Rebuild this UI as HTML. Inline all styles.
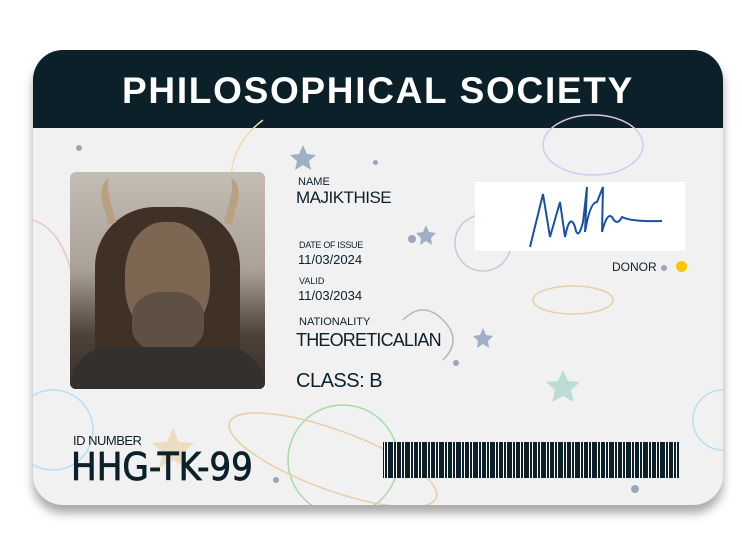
<!DOCTYPE html>
<html><head><style>
body{margin:0;width:742px;height:549px;background:#fff;position:relative;overflow:hidden;font-family:"Liberation Sans",sans-serif}
.card{position:absolute;left:33px;top:50px;width:690px;height:455px;border-radius:30px;background:#f1f1f1;overflow:hidden;box-shadow:0 8px 10px rgba(0,0,0,.35)}
.hdr{position:absolute;left:0;top:0;width:690px;height:78px;background:#0c202a;color:#fff;font-weight:bold;font-size:37px;text-align:center;line-height:82px;letter-spacing:1.7px}
.t{position:absolute;color:#0c202a;white-space:nowrap}
.dot{position:absolute;border-radius:50%;background:#9aa6b8}
</style></head><body>
<div class="card">
<div class="hdr">PHILOSOPHICAL SOCIETY</div>
<svg width="690" height="455" style="position:absolute;left:0;top:0">
<g fill="none" stroke-width="1.5">
<circle cx="310" cy="410" r="55" stroke="#a9d9a5"/>
<ellipse cx="300" cy="410" rx="110" ry="30" stroke="#e6cfa8" transform="rotate(20 300 410)"/>
<circle cx="450" cy="193" r="28" stroke="#c3ccd6"/>
<ellipse cx="540" cy="250" rx="40" ry="14" stroke="#e6cfa8"/>
<circle cx="20" cy="380" r="40" stroke="#b8def0"/>
<circle cx="690" cy="370" r="30" stroke="#b8def0"/>
<path d="M230 70 q-40 30 -30 80" stroke="#f0dca8"/>
<path d="M0 170 q30 10 40 60" stroke="#f0c0cc"/>
<path d="M370 270 q20 -20 40 0 q20 20 0 40" stroke="#b0b8c4"/>
<ellipse cx="560" cy="95" rx="50" ry="30" stroke="#d9c6ee"/>
</g>
<g fill="#9fb0c6"><path d="M270 95l4 9 9 1-7 6 2 9-8-5-8 5 2-9-7-6 9-1z"/><path d="M393 175l3 7 7 1-5 5 1 7-6-4-6 4 1-7-5-5 7-1z"/><path d="M450 278l3 7 7 1-5 5 1 7-6-4-6 4 1-7-5-5 7-1z"/></g>
<path d="M530 320l5 11 12 1-9 8 3 12-11-6-11 6 3-12-9-8 12-1z" fill="#bcdcd6"/>
<path d="M140 378l6 14 15 1-11 10 4 15-14-8-14 8 4-15-11-10 15-1z" fill="#ecdcc0"/>
</svg>
<div class="dot" style="left:43px;top:95px;width:6px;height:6px"></div>
<div class="dot" style="left:340px;top:110px;width:5px;height:5px"></div>
<div class="dot" style="left:375px;top:185px;width:8px;height:8px"></div>
<div class="dot" style="left:420px;top:310px;width:6px;height:6px"></div>
<div class="dot" style="left:598px;top:435px;width:8px;height:8px"></div>
<div class="dot" style="left:628px;top:215px;width:6px;height:6px"></div>
<div class="dot" style="left:240px;top:427px;width:6px;height:6px"></div>
<div style="position:absolute;left:37px;top:122px;width:195px;height:217px;border-radius:6px;overflow:hidden;background:linear-gradient(180deg,#c3bdb4 0,#aaa197 45%,#4e4238 75%,#35302c 100%)">
<div style="position:absolute;left:25px;top:35px;width:145px;height:185px;border-radius:60px 60px 10px 10px;background:#3f3125"></div>
<div style="position:absolute;left:55px;top:50px;width:85px;height:115px;border-radius:45%;background:#7d6753"></div>
<div style="position:absolute;left:62px;top:120px;width:72px;height:60px;border-radius:40%;background:#5e5044"></div>
<div style="position:absolute;left:0;top:175px;width:195px;height:50px;background:#33302d;border-radius:40px 40px 0 0"></div>
<div style="position:absolute;left:32px;top:5px;width:20px;height:45px;border-radius:50% 50% 0 0;border-left:8px solid #b8a080;transform:rotate(-15deg)"></div>
<div style="position:absolute;left:140px;top:5px;width:20px;height:45px;border-radius:50% 50% 0 0;border-right:8px solid #b8a080;transform:rotate(15deg)"></div>
</div>
<div class="t" style="left:265px;top:126px;font-size:11px">NAME</div>
<div class="t" style="left:263px;top:138px;font-size:17px;letter-spacing:-0.5px">MAJIKTHISE</div>
<div class="t" style="left:266px;top:190px;font-size:9px;letter-spacing:-0.3px">DATE OF ISSUE</div>
<div class="t" style="left:265px;top:202px;font-size:13px">11/03/2024</div>
<div class="t" style="left:266px;top:226px;font-size:9px">VALID</div>
<div class="t" style="left:265px;top:238px;font-size:13px">11/03/2034</div>
<div class="t" style="left:266px;top:266px;font-size:11px">NATIONALITY</div>
<div class="t" style="left:263px;top:280px;font-size:18px;letter-spacing:-0.8px">THEORETICALIAN</div>
<div class="t" style="left:263px;top:320px;font-size:20px;letter-spacing:-0.5px">CLASS: B</div>
<div style="position:absolute;left:442px;top:132px;width:210px;height:69px;background:#fff">
<svg width="210" height="69"><path d="M55 65 L68 12 L75 55 L85 20 L90 55 q5 -25 10 -10 q3 15 8 -5 L112 5 L110 50 q5 -30 12 -30 L128 5 L127 50 q5-20 10-15 q5 10 10 0 q10 5 40 4" fill="none" stroke="#1a4fa8" stroke-width="2"/></svg></div>
<div class="t" style="left:579px;top:210px;font-size:12px">DONOR</div>
<div style="position:absolute;left:643px;top:211px;width:11px;height:11px;border-radius:50%;background:#f7c600"></div>
<div class="t" style="left:40px;top:383px;font-size:13px;letter-spacing:-0.5px">ID NUMBER</div>
<div class="t" style="left:38px;top:395px;font-size:38px;font-family:'DejaVu Sans Condensed','DejaVu Sans',sans-serif;-webkit-text-stroke:0.8px #0c202a">HHG-TK-99</div>
<div style="position:absolute;left:347px;top:390px;width:302px;height:40px;background:#fff;padding:2px 3px;box-sizing:border-box;background-image:repeating-linear-gradient(90deg,#0c202a 0 4px,#fff 4px 5px,#0c202a 5px 7px,#fff 7px 8px,#0c202a 8px 13px,#fff 13px 14px,#0c202a 14px 16px,#fff 16px 17px);background-clip:content-box"></div>
</div>
</body></html>
